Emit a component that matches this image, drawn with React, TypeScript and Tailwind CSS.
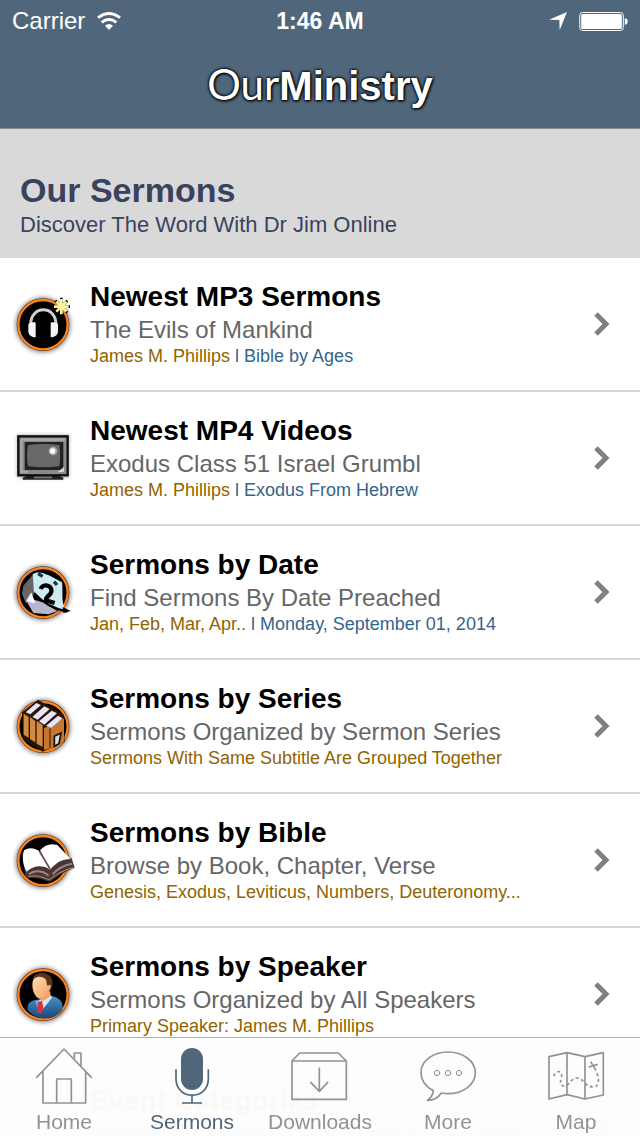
import type { ReactNode } from "react";

const tabStroke = {
  fill: "none",
  stroke: "currentColor",
  strokeWidth: 5,
  strokeLinecap: "round",
  strokeLinejoin: "round",
} as const;

function RowIcon({ round = true, children }: { round?: boolean; children: ReactNode }) {
  return (
    <svg viewBox="0 0 270 270" aria-hidden className="size-[90px] shrink-0">
      <defs>
        <filter id="soft" x="-20%" y="-20%" width="140%" height="140%">
          <feGaussianBlur stdDeviation="1.7" />
        </filter>
        <filter id="glow" x="-30%" y="-30%" width="160%" height="160%">
          <feGaussianBlur stdDeviation="6" />
        </filter>
      </defs>
      {round ? (
        <>
          <circle cx="129" cy="138" r="83" fill="#000" opacity="0.45" filter="url(#glow)" />
          <g filter="url(#soft)">
            <circle cx="129" cy="137" r="79" fill="#5a2a08" />
            <circle cx="129" cy="137" r="74" fill="#000" stroke="#fa8420" strokeWidth="7" />
          </g>
        </>
      ) : null}
      <g filter="url(#soft)">{children}</g>
    </svg>
  );
}

function HeadphonesIcon() {
  return (
    <RowIcon>
      <path d="M92 137c0-60 76-60 76 0" fill="none" stroke="#cfcfcf" strokeWidth="9" />
      <path d="M85 136c3-6 14-8 22-5v44c-15 0-24-10-22-22z" fill="#f4f4f4" />
      <path d="M174 136c-3-6-14-8-22-5v44c15 0 24-10 22-22z" fill="#f4f4f4" />
      <path d="M184 56v54M158 83h52M166 65l36 36M202 65l-36 36" stroke="#000" strokeWidth="8" />
      <path d="M184 60v46M162 83h44M169 68l30 30M199 68l-30 30" stroke="#fbf7a0" strokeWidth="8" />
    </RowIcon>
  );
}

function TelevisionIcon() {
  return (
    <RowIcon round={false}>
      <rect x="52" y="67" width="154" height="126" rx="4" fill="#000" opacity="0.35" filter="url(#glow)" />
      <path d="M68 194l22-10h78l22 10v6H68z" fill="#222" />
      <path d="M102 189h54v7h-54z" fill="#777" />
      <rect x="55" y="70" width="148" height="117" fill="#8a8a8a" stroke="#101010" strokeWidth="7" />
      <path d="M62 80h134" stroke="#aaa" strokeWidth="7" />
      <path d="M64 82v94h20" fill="none" stroke="#aaa" strokeWidth="6" />
      <rect x="74" y="87" width="116" height="84" fill="#222" />
      <path d="M84 96q50-6 94 0 5 36 0 64-44 6-94 0-6-32 0-64z" fill="#686868" />
      <circle cx="159" cy="114" r="13" fill="#aaa" />
      <circle cx="158" cy="114" r="8" fill="#fff" />
      <path d="M172 178l20-16v14z" fill="#d8d8d8" />
    </RowIcon>
  );
}

function CalendarIcon() {
  return (
    <RowIcon>
      <path d="M70 116l28-32 6 56-26 30-12-30z" fill="#666" />
      <path d="M78 160l14-22 10 20 26 8 44 26-26 10-46-4z" fill="#b9b5cc" />
      <path d="M80 162l14-26 12 34z" fill="#f5f5ff" />
      <path d="M98 82c20-14 48 2 88 24 4 26-4 54 10 84-36-2-68-22-94-52z" fill="#cdebf0" />
      <path d="M102 138c26 30 54 46 100 56" fill="none" stroke="#000" strokeWidth="7" />
      <path d="M114 80l14 8M162 104l9 10" stroke="#234" strokeWidth="10" />
      <path d="M122 126c6-18 36-12 32 8-2 12-18 14-16 26l26 8" fill="none" stroke="#000" strokeWidth="13" />
      <path d="M188 180l24 12-22 6z" fill="#000" />
    </RowIcon>
  );
}

function BooksIcon() {
  return (
    <RowIcon>
      <path d="M66 94l48-38 76 44 4 82-66 30-58-36z" fill="#2c1402" />
      <path d="M71 98l15 10v62l-15-9zM90 108l16 12v64l-16-10zM110 120l18 12v66l-18-10z" fill="#d38b42" />
      <path d="M132 142l60-30v70l-34 22-26 2z" fill="#c57632" />
      <path d="M77 94l32-28 14 6-32 28zM97 108l36-32 16 8-36 32zM117 121l38-32 16 8-38 34zM138 134l36-30 14 8-34 28z" fill="#e6e4fa" />
      <path d="M150 142v60" stroke="#5a2a06" strokeWidth="4" />
      <path d="M163 166l20-10-6 32-14 8z" fill="#ddd" stroke="#111" strokeWidth="5" />
    </RowIcon>
  );
}

function OpenBookIcon() {
  return (
    <RowIcon>
      <path d="M66 110l10 76 46 6 28 8 32-22 42-20-10-30z" fill="#4a3530" />
      <path d="M72 106c14-10 34-8 48 4l30 54c-24-16-50-12-70 6-12-20-14-42-8-64z" fill="#fff" />
      <path d="M120 106c14-16 32-22 52-16l40 42c-26 0-42 10-62 32z" fill="#fff" />
      <path d="M118 108l32 54" stroke="#6b4c44" strokeWidth="5" />
      <path d="M86 178c18-14 42-12 60 4M158 178c16-20 36-28 58-32" fill="none" stroke="#98857e" strokeWidth="6" />
      <path d="M84 186c24-8 44 0 62 8 16-8 34-26 74-36" fill="none" stroke="#c09480" strokeWidth="3" />
    </RowIcon>
  );
}

function SpeakerIcon() {
  return (
    <RowIcon>
      <defs>
        <linearGradient id="suit" x1="0" y1="0" x2="0" y2="1">
          <stop offset="0" stopColor="#4d93c6" />
          <stop offset="1" stopColor="#1a4676" />
        </linearGradient>
        <linearGradient id="face" x1="0" y1="0" x2="1" y2="1">
          <stop offset="0" stopColor="#ffdfb4" />
          <stop offset="1" stopColor="#ef9c58" />
        </linearGradient>
      </defs>
      <path d="M83 184c-2-22 8-30 30-32l42-12c26 8 36 18 32 44-26 34-76 32-104 0z" fill="url(#suit)" />
      <path d="M108 158l44-20 4 8-30 38-10 6z" fill="#d5e4f2" />
      <path d="M112 158l14-2 4 22-8 18-10-14z" fill="#d0353c" />
      <path d="M126 140l24-16 2 18-26 16z" fill="#f0a468" />
      <path d="M98 90c6-24 52-24 58 2 4 18-2 28-8 36l-18-18z" fill="#5b3516" />
      <path d="M98 98c4-18 28-18 38-8 6 6 2 18 8 20 6-6 12 0 6 10-6 14-14 26-28 30-18-2-28-32-24-52z" fill="url(#face)" />
    </RowIcon>
  );
}

function EventsIcon() {
  return (
    <svg viewBox="0 0 90 90" aria-hidden className="size-[90px] shrink-0">
      <circle cx="43" cy="46" r="26" fill="#f1dfc8" />
    </svg>
  );
}

type Row = { title: string; summary: string; gold: string; blue?: string; icon: ReactNode };

const rows: Row[] = [
  { title: "Newest MP3 Sermons", summary: "The Evils of Mankind", gold: "James M. Phillips", blue: "Bible by Ages", icon: <HeadphonesIcon /> },
  { title: "Newest MP4 Videos", summary: "Exodus Class 51 Israel Grumbl", gold: "James M. Phillips", blue: "Exodus From Hebrew", icon: <TelevisionIcon /> },
  { title: "Sermons by Date", summary: "Find Sermons By Date Preached", gold: "Jan, Feb, Mar, Apr..", blue: "Monday, September 01, 2014", icon: <CalendarIcon /> },
  { title: "Sermons by Series", summary: "Sermons Organized by Sermon Series", gold: "Sermons With Same Subtitle Are Grouped Together", icon: <BooksIcon /> },
  { title: "Sermons by Bible", summary: "Browse by Book, Chapter, Verse", gold: "Genesis, Exodus, Leviticus, Numbers, Deuteronomy...", icon: <OpenBookIcon /> },
  { title: "Sermons by Speaker", summary: "Sermons Organized by All Speakers", gold: "Primary Speaker: James M. Phillips", icon: <SpeakerIcon /> },
  { title: "Event Categories", summary: "Sermons Organized by Event Categories", gold: "", icon: <EventsIcon /> },
];

const tabs = [
  {
    label: "Home",
    icon: (
      <svg viewBox="102 45 180 180" aria-hidden className="size-[60px]" {...tabStroke}>
        <path d="M110 142l82-85 82 85M129 124v95h128v-95M170 219v-72h44v72M223 88V69h20v39" />
      </svg>
    ),
  },
  {
    label: "Sermons",
    active: true,
    icon: (
      <svg viewBox="486 45 180 180" aria-hidden className="size-[60px]" {...tabStroke}>
        <rect x="543" y="54" width="66" height="126" rx="33" fill="currentColor" stroke="none" />
        <path d="M528 118v28c0 66 97 66 97 0v-28M576 196v23M546 219h60" strokeLinecap="butt" />
      </svg>
    ),
  },
  {
    label: "Downloads",
    icon: (
      <svg viewBox="870 45 180 180" aria-hidden className="size-[60px]" {...tabStroke}>
        <path d="M876 93v115h163V93zM876 93l23-24h116l24 24M958 115v68M932 157l26 27 25-27" />
      </svg>
    ),
  },
  {
    label: "More",
    icon: (
      <svg viewBox="294 45 180 180" aria-hidden className="size-[60px]" {...tabStroke}>
        <path d="M340 182c-24-13-37-31-37-54 0-35 36-62 81-62s82 27 82 62-36 63-82 63c-7 0-14-1-20-2-9 14-24 22-42 22 12-8 17-18 18-29z" />
        <g strokeWidth="3">
          <circle cx="351" cy="129" r="8" />
          <circle cx="384" cy="129" r="8" />
          <circle cx="417" cy="129" r="8" />
        </g>
      </svg>
    ),
  },
  {
    label: "Map",
    icon: (
      <svg viewBox="678 45 180 180" aria-hidden className="size-[60px]" {...tabStroke}>
        <path d="M687 80l54-12 54 12 55-12v127l-55 12-54-13-54 13zM741 68v126M795 80v127" />
        <path d="M701 139c5-18 26-19 24-2-2 14-10 30 7 31 16 0 20-24 40-24 18 0 22 27 48 27 22 0 16-34 7-50" strokeDasharray="9 8" strokeLinecap="butt" />
        <path d="M812 95l16 26M806 111l27-8" strokeLinecap="butt" />
      </svg>
    ),
  },
];

function StatusBar() {
  return (
    <div className="grid h-[42px] grid-cols-3 items-center px-3 text-2xl text-white">
      <div className="flex items-center gap-3">
        <span>Carrier</span>
        <svg viewBox="0 0 72 54" aria-hidden className="h-[18px] w-6" fill="none" stroke="#fff" strokeWidth="9">
          <path d="M3 17q33-25 66 0" />
          <path d="M14 31q22-17 44 0" />
          <path d="M24 41q12-10 24 0L36 54z" fill="#fff" stroke="none" />
        </svg>
      </div>
      <span className="text-center text-[23px] font-bold">1:46 AM</span>
      <div className="flex items-center justify-end gap-3">
        <svg viewBox="0 0 54 54" aria-hidden className="size-[18px]">
          <path d="M54 0L32 54l-1-30L0 23z" fill="#fff" />
        </svg>
        <svg viewBox="0 0 148 58" aria-hidden className="h-[19px] w-[49px]">
          <rect x="1.5" y="1.5" width="133" height="55" rx="9" fill="none" stroke="#fff" strokeWidth="3" />
          <rect x="6" y="6" width="124" height="46" rx="5" fill="#fff" />
          <path d="M139 19q9 1 9 10t-9 10z" fill="#fff" />
        </svg>
      </div>
    </div>
  );
}

export default function App() {
  return (
    <div className="flex h-screen flex-col overflow-hidden bg-white font-['Liberation_Sans',Arial,sans-serif]">
      <header className="h-[129px] shrink-0 border-b border-[#8b8b8b] bg-[#4f667b]">
        <StatusBar />
        <h1 className="flex h-[86px] items-baseline justify-center pt-3 text-[40px] leading-[60px] font-bold text-white [text-shadow:0_0_3px_#000,0_0_3px_#000,1px_1px_3px_#000]">
          <span className="font-['Lato',sans-serif] text-[42px] font-normal">Our</span>
          Ministry
        </h1>
      </header>

      <main className="min-h-0 flex-1 overflow-y-auto [scrollbar-width:none]">
        <section className="h-[129px] bg-[#d9d9d9] px-5 pt-10 text-[#3a435e]">
          <h2 className="text-[34px] leading-[42px] font-bold">Our Sermons</h2>
          <p className="text-[22px] leading-7">Discover The Word With Dr Jim Online</p>
        </section>

        <ul>
          {rows.map((row) => (
            <li key={row.title} className="border-b-2 border-[#d5d5d5]">
              <a href="#sermons" className="flex h-[132px] items-center pr-7">
                {row.icon}
                <div className="min-w-0 flex-1 pb-0.5">
                  <h3 className="truncate text-[28px] leading-[38px] font-bold text-black">{row.title}</h3>
                  <p className="truncate text-2xl leading-7 text-[#666]">{row.summary}</p>
                  <p className="h-6 truncate text-lg leading-6 text-[#916400]">
                    {row.gold}
                    {row.blue && <span className="text-[#34658c]"> l {row.blue}</span>}
                  </p>
                </div>
                <svg viewBox="0 0 20 28" aria-hidden className="h-7 w-5" fill="none" stroke="#808080" strokeWidth="5">
                  <path d="M4 4l10 10L4 24" />
                </svg>
              </a>
            </li>
          ))}
        </ul>
      </main>

      <nav className="fixed inset-x-0 bottom-0 grid h-[99px] grid-cols-5 border-t border-[#adadad] bg-[#fdfdfd]/98 backdrop-blur-[1px]">
        {tabs.map((tab) => (
          <a
            key={tab.label}
            href={`#${tab.label.toLowerCase()}`}
            className={`flex flex-col items-center pt-[7px] ${tab.active ? "text-[#4f667b]" : "text-[#929292]"}`}
          >
            {tab.icon}
            <span className="mt-[5px] text-[21px] leading-6">{tab.label}</span>
          </a>
        ))}
      </nav>
    </div>
  );
}
